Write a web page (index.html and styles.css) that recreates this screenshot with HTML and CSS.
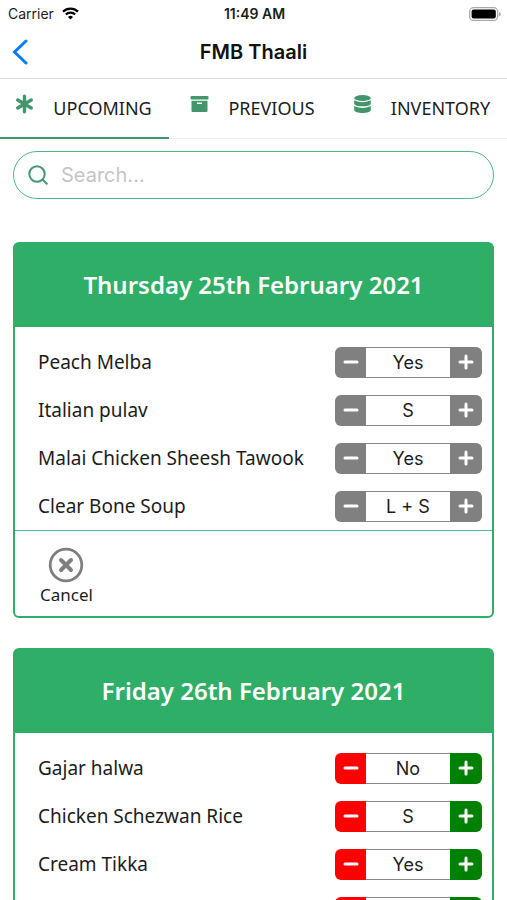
FILE: index.html
```html
<!DOCTYPE html>
<html lang="en">
<head>
<meta charset="utf-8">
<meta name="viewport" content="width=device-width, initial-scale=1">
<title>FMB Thaali</title>
<link rel="stylesheet" href="styles.css">
</head>
<body>
<svg class="sprite" aria-hidden="true">
  <symbol id="minus" viewBox="0 0 16 16"><path d="M2 8h12" stroke="currentColor" stroke-width="3" stroke-linecap="round"/></symbol>
  <symbol id="plus" viewBox="0 0 16 16"><path d="M2 8h12M8 2v12" stroke="currentColor" stroke-width="3" stroke-linecap="round"/></symbol>
</svg>
<div class="app">
  <div class="status">
    <div class="carrier">Carrier
      <svg width="17" height="13" viewBox="0 0 17 13" fill="none" stroke="#000" stroke-width="2.300"><path d="M1 4.600a10.800 10.800 0 0 1 15 0M3.800 7.500a6.900 6.900 0 0 1 9.400 0"/><path d="M8.500 12.500L6 10a3.700 3.700 0 0 1 5 0z" fill="#000" stroke="none"/></svg>
    </div>
    <div class="time">11:49 AM</div>
    <div class="battery">
      <svg width="32" height="14" viewBox="0 0 32 14"><rect x=".7" y=".7" width="28" height="12.800" rx="4" fill="#fff" stroke="#aaa" stroke-width="1.300"/><rect x="2.600" y="2.600" width="24.200" height="9" rx="2" fill="#000"/><path d="M30.200 5v4.400q1.500-.7 1.500-2.200T30.200 5z" fill="#999"/></svg>
    </div>
  </div>
  <header class="nav">
    <button class="back" aria-label="Back"><svg width="16" height="26" viewBox="0 0 16 26" fill="none" stroke="#067bff" stroke-width="3"><path d="M14 2L2.500 13 14 24" stroke-linecap="round"/></svg></button>
    <h1>FMB Thaali</h1>
  </header>
  <nav class="tabs">
    <a class="tab active" href="#upcoming">
      <svg width="19" height="20" viewBox="0 0 19 20" stroke="currentColor" stroke-width="3.400" stroke-linecap="round"><path d="M9.500 2.200v15.600M2.700 6l13.600 8M16.300 6L2.700 14"/></svg>UPCOMING</a>
    <a class="tab" href="#previous">
      <svg width="19" height="20" viewBox="0 0 19 20" fill="currentColor"><rect x=".5" y="2" width="18" height="3.600" rx="1"/><path fill-rule="evenodd" d="M1.500 6.700h16V17q0 1-1 1h-14q-1 0-1-1zM7 8.500v1.500h5V8.500z"/></svg>PREVIOUS</a>
    <a class="tab" href="#inventory">
      <svg width="19" height="20" viewBox="0 0 19 20" fill="currentColor"><ellipse cx="9.500" cy="4" rx="8.300" ry="3"/><path d="M1.200 6.200q8.300 4 16.600 0v3.200c0 3.900-16.600 3.900-16.600 0zM1.200 12q8.300 4 16.600 0v4c0 4-16.600 4-16.600 0z"/></svg>INVENTORY</a>
  </nav>
  <main>
    <label class="search">
      <svg width="20" height="20" viewBox="0 0 20 20" fill="none" stroke="#45957a" stroke-width="2" stroke-linecap="round"><circle cx="9" cy="9" r="7.700"/><path d="M14.800 14.800l4 4"/></svg>
      <input type="search" placeholder="Search..." aria-label="Search">
    </label>

    <section class="card locked">
      <h2>Thursday 25th February 2021</h2>
      <ul>
        <li><span>Peach Melba</span><div class="stepper"><button aria-label="Less Peach Melba"><svg><use href="#minus"/></svg></button><output>Yes</output><button aria-label="More Peach Melba"><svg><use href="#plus"/></svg></button></div></li>
        <li><span>Italian pulav</span><div class="stepper"><button aria-label="Less Italian pulav"><svg><use href="#minus"/></svg></button><output>S</output><button aria-label="More Italian pulav"><svg><use href="#plus"/></svg></button></div></li>
        <li><span>Malai Chicken Sheesh Tawook</span><div class="stepper"><button aria-label="Less Malai Chicken Sheesh Tawook"><svg><use href="#minus"/></svg></button><output>Yes</output><button aria-label="More Malai Chicken Sheesh Tawook"><svg><use href="#plus"/></svg></button></div></li>
        <li><span>Clear Bone Soup</span><div class="stepper"><button aria-label="Less Clear Bone Soup"><svg><use href="#minus"/></svg></button><output>L + S</output><button aria-label="More Clear Bone Soup"><svg><use href="#plus"/></svg></button></div></li>
      </ul>
      <footer>
        <button class="cancel"><svg width="36" height="36" viewBox="0 0 36 36" fill="none" stroke="#7f7f7f"><circle cx="18" cy="18" r="15.800" stroke-width="2.800"/><path d="M13 13l10 10M23 13L13 23" stroke-width="4" stroke-linecap="round"/></svg>Cancel</button>
      </footer>
    </section>

    <section class="card">
      <h2>Friday 26th February 2021</h2>
      <ul>
        <li><span>Gajar halwa</span><div class="stepper"><button aria-label="Less Gajar halwa"><svg><use href="#minus"/></svg></button><output>No</output><button aria-label="More Gajar halwa"><svg><use href="#plus"/></svg></button></div></li>
        <li><span>Chicken Schezwan Rice</span><div class="stepper"><button aria-label="Less Chicken Schezwan Rice"><svg><use href="#minus"/></svg></button><output>S</output><button aria-label="More Chicken Schezwan Rice"><svg><use href="#plus"/></svg></button></div></li>
        <li><span>Cream Tikka</span><div class="stepper"><button aria-label="Less Cream Tikka"><svg><use href="#minus"/></svg></button><output>Yes</output><button aria-label="More Cream Tikka"><svg><use href="#plus"/></svg></button></div></li>
        <li><span></span><div class="stepper"><button aria-label="Less"><svg><use href="#minus"/></svg></button><output></output><button aria-label="More"><svg><use href="#plus"/></svg></button></div></li>
      </ul>
    </section>
  </main>
</div>
</body>
</html>
```
FILE: styles.css
```css
* { box-sizing: border-box; }
body {
  margin: 0;
  background: #fff;
  color: #1c1c1c;
  font-family: "Noto Sans", "Open Sans", sans-serif;
}
button { border: 0; padding: 0; background: none; font: inherit; color: inherit; }
svg { display: block; flex: none; }
.sprite { position: absolute; width: 0; height: 0; }

.app { display: flex; flex-direction: column; height: 100vh; overflow: hidden; }

.status {
  display: grid;
  grid-template-columns: 1fr auto 1fr;
  align-items: center;
  height: 27px;
  padding: 0 6px 0 8px;
  font: 14px/20px Inter, sans-serif;
}
.carrier { display: flex; align-items: center; gap: 8px; }
.time { font-weight: 600; }
.battery { justify-self: end; }

.nav {
  display: grid;
  grid-template-columns: 1fr auto 1fr;
  align-items: center;
  height: 52px;
  padding: 0 12px 2px;
  border-bottom: 1px solid #d8d8d8;
}
.back { justify-self: start; }
h1 { margin: 0; font: 600 20px/28px Inter, sans-serif; color: #111; }

.tabs { display: flex; height: 60px; border-bottom: 1px solid #eee; }
.tab {
  flex: 1;
  display: flex;
  align-items: center;
  justify-content: center;
  gap: 19px;
  margin-bottom: -1px;
  padding-right: 2px;
  border-bottom: 2px solid transparent;
  color: #1c1c1c;
  font-size: 18px;
  text-decoration: none;
}
.tab.active { border-color: #43966b; }
.tab svg { color: #43966b; margin-bottom: 8px; }

main { flex: 1; min-height: 0; overflow: hidden; padding: 12px 13px; }

.search {
  display: flex;
  align-items: center;
  gap: 13px;
  height: 48px;
  margin-bottom: 43px;
  padding: 0 14px;
  border: 1px solid #4dba84;
  border-radius: 24px;
}
.search input {
  flex: 1;
  min-width: 0;
  padding: 0;
  border: 0;
  outline: 0;
  background: none;
  font: 20px/28px Inter, sans-serif;
}
.search input::placeholder { color: #c5c5c9; opacity: 1; }

.card {
  margin-bottom: 30px;
  border: 2px solid #2fae68;
  border-radius: 6px;
}
h2 {
  margin: 0;
  padding: 25px 0 26px;
  background: #2fae68;
  color: #fff;
  font-size: 24px;
  line-height: 32px;
  font-weight: 600;
  text-align: center;
}
ul { margin: 0; padding: 11px 10px 0 23px; list-style: none; }
li { display: flex; align-items: center; justify-content: space-between; height: 48px; font-size: 19px; white-space: nowrap; }

.stepper {
  display: flex;
  width: 147px;
  height: 31px;
  overflow: hidden;
  border-radius: 6px;
  color: #fff;
}
.stepper button { display: grid; place-items: center; width: 31px; background: red; }
.stepper button:last-child { width: 32px; background: green; }
.stepper svg { width: 16px; height: 16px; }
.stepper output {
  flex: 1;
  border: 1px solid #888;
  border-width: 1px 0;
  color: #1c1c1c;
  font: 18px/29px Inter, sans-serif;
  text-align: center;
}
.locked .stepper button { background: #808080; }

.card footer { padding: 16px 25px 9px; border-top: 1px solid #4db990; }
.cancel { display: flex; flex-direction: column; align-items: center; font-size: 17px; line-height: 24px; }
```
